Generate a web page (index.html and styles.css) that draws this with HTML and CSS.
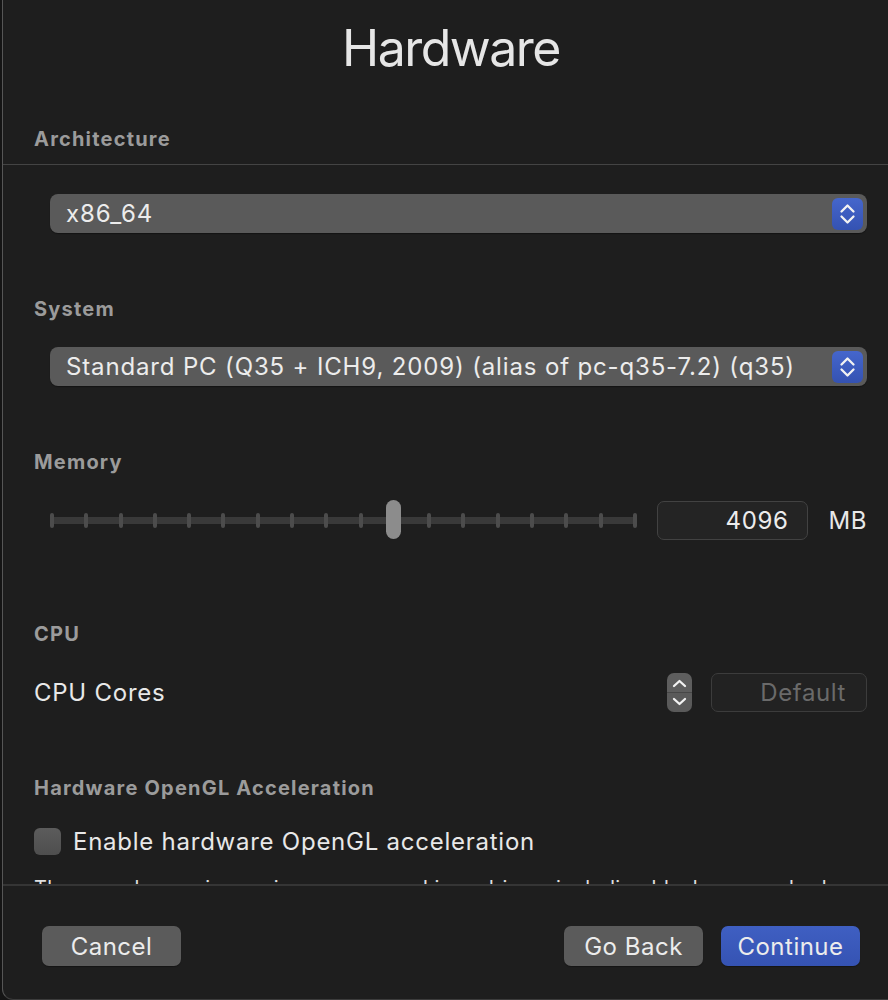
FILE: index.html
```html
<!DOCTYPE html>
<html>
<head>
<meta charset="utf-8">
<link rel="stylesheet" href="styles.css">
</head>
<body>
<div class="window">
  <header class="head">
    <h1 class="title">Hardware</h1>
    <div class="label arch-label">Architecture</div>
  </header>
  <main class="content">
    <div class="popup">
      <span class="popup-text">x86_64</span>
      <span class="popup-btn"><svg width="31" height="32" viewBox="0 0 31 32"><polyline points="9.5,13.5 15.5,7.5 21.5,13.5"/><polyline points="9.5,18.5 15.5,24.5 21.5,18.5"/></svg></span>
    </div>

    <div class="label sec-label">System</div>
    <div class="popup">
      <span class="popup-text">Standard PC (Q35 + ICH9, 2009) (alias of pc-q35-7.2) (q35)</span>
      <span class="popup-btn"><svg width="31" height="32" viewBox="0 0 31 32"><polyline points="9.5,13.5 15.5,7.5 21.5,13.5"/><polyline points="9.5,18.5 15.5,24.5 21.5,18.5"/></svg></span>
    </div>

    <div class="label sec-label">Memory</div>
    <div class="memory-row">
      <div class="slider">
        <div class="ticks">
          <i></i><i></i><i></i><i></i><i></i><i></i><i></i><i></i><i></i><i></i><i></i><i></i><i></i><i></i><i></i><i></i><i></i><i></i>
        </div>
        <span class="knob"></span>
      </div>
      <div class="field">4096</div>
      <span class="unit">MB</span>
    </div>

    <div class="label cpu-label">CPU</div>
    <div class="cpu-row">
      <span class="row-text">CPU Cores</span>
      <span class="stepper"><svg width="25" height="39" viewBox="0 0 25 39"><polyline points="7,13 12.5,8 18,13"/><polyline points="7,26 12.5,31 18,26"/></svg></span>
      <div class="field field-default">Default</div>
    </div>

    <div class="label sec-label">Hardware OpenGL Acceleration</div>
    <div class="check-row">
      <span class="checkbox"></span>
      <span class="row-text">Enable hardware OpenGL acceleration</span>
    </div>
    <p class="note">There are known issues in some newer Linux drivers including black screen, broken graphics and crashes.</p>
  </main>
  <footer class="foot">
    <button class="btn">Cancel</button>
    <div class="foot-right">
      <button class="btn">Go Back</button>
      <button class="btn btn-primary">Continue</button>
    </div>
  </footer>
</div>
</body>
</html>
```

FILE: styles.css
```css
html, body {
  margin: 0;
  padding: 0;
  width: 888px;
  height: 1000px;
  overflow: hidden;
  background: #151515;
}
body {
  font-family: Inter, "Noto Sans", sans-serif;
  color: #e8e8e8;
}
.window {
  margin-left: 2px;
  width: 896px;
  height: 999px;
  background: #1e1e1e;
  border-left: 1px solid #565656;
  border-bottom: 1px solid #3c3c3c;
  border-bottom-left-radius: 11px;
  display: flex;
  flex-direction: column;
  overflow: hidden;
}
.head {
  padding: 17px 0 13px 31px;
  border-bottom: 1px solid #444444;
  flex: none;
}
.title {
  margin: 0 0 48px -31px;
  font-size: 50px;
  line-height: 62px;
  font-weight: 400;
  text-align: center;
  color: #e6e6e6;
  letter-spacing: -1.5px;
}
.label {
  font-size: 20px;
  line-height: 24px;
  font-weight: 650;
  color: #9b9b9b;
  letter-spacing: 1.2px;
}
.content {
  height: 721px;
  flex: none;
  overflow: hidden;
  padding: 29px 32px 0 31px;
  box-sizing: border-box;
  border-bottom: 2px solid #353535;
}
.popup {
  margin-left: 16px;
  height: 39px;
  box-sizing: border-box;
  background: #5a5a5a;
  border-radius: 8px;
  display: flex;
  align-items: center;
  justify-content: space-between;
  padding: 0 4px 0 16px;
  box-shadow: 0 1px 1px rgba(0,0,0,0.35);
}
.popup-text {
  font-size: 24px;
  color: #ececec;
  letter-spacing: 0.85px;
}
.popup-btn {
  width: 31px;
  height: 32px;
  border-radius: 6px;
  background: linear-gradient(#4566cc, #3452b2);
  display: flex;
}
.popup-btn svg polyline, .stepper svg polyline {
  fill: none;
  stroke: #f2f2f2;
  stroke-width: 2.3;
  stroke-linecap: round;
  stroke-linejoin: round;
}
.sec-label {
  margin-top: 64px;
  margin-bottom: 26px;
}
.cpu-label {
  margin-top: 82px;
  margin-bottom: 26px;
}
.memory-row {
  margin-left: 16px;
  height: 40px;
  display: flex;
  align-items: center;
}
.slider {
  position: relative;
  width: 587px;
  height: 40px;
  flex: none;
  display: flex;
  align-items: center;
}
.ticks {
  width: 100%;
  height: 15px;
  display: flex;
  justify-content: space-between;
  background: linear-gradient(#1e1e1e 4px, #393939 4px, #393939 11px, #1e1e1e 11px);
}
.ticks i {
  width: 4px;
  height: 15px;
  border-radius: 2px;
  background: #4c4c4c;
}
.knob {
  position: absolute;
  left: 336px;
  top: 0;
  width: 15px;
  height: 39px;
  border-radius: 8px;
  background: #8c8c8c;
}
.field {
  height: 39px;
  box-sizing: border-box;
  border: 1px solid #424242;
  border-radius: 7px;
  background: #242424;
  font-size: 24px;
  line-height: 37px;
  text-align: right;
  padding-right: 19px;
  color: #ececec;
  letter-spacing: 0.6px;
}
.memory-row .field {
  width: 154px;
  margin-left: 20px;
}
.unit {
  margin-left: 20px;
  font-size: 24px;
  color: #e8e8e8;
  letter-spacing: 0.6px;
}
.cpu-row {
  height: 40px;
  display: flex;
  align-items: center;
}
.row-text {
  font-size: 24px;
  color: #e8e8e8;
  letter-spacing: 0.75px;
}
.cpu-row .row-text {
  flex: 1;
}
.stepper {
  width: 25px;
  height: 39px;
  border-radius: 7px;
  background: linear-gradient(#5e5e5e 0, #5e5e5e 19px, #474747 19px, #474747 20px, #5a5a5a 20px);
  display: flex;
}
.field-default {
  width: 156px;
  margin-left: 19px;
  color: #6a6a6a;
  border-color: #3c3c3c;
  background: #222222;
  padding-right: 20px;
}
.check-row {
  margin-top: 27px;
  height: 28px;
  display: flex;
  align-items: center;
}
.checkbox {
  width: 27px;
  height: 27px;
  border-radius: 6px;
  background: linear-gradient(#5c5c5c, #4e4e4e);
  margin-right: 12px;
  flex: none;
}
.note {
  margin: 21px 0 0;
  font-size: 20px;
  line-height: 24px;
  color: #e0e0e0;
  white-space: nowrap;
  letter-spacing: 0.4px;
}
.foot {
  flex: 1;
  display: flex;
  justify-content: space-between;
  align-items: flex-start;
  padding: 40px 39px 0 39px;
}
.foot-right {
  display: flex;
  gap: 18px;
}
.btn {
  width: 139px;
  height: 40px;
  border: none;
  border-radius: 7px;
  background: #5b5b5b;
  color: #ececec;
  font-family: Inter, "Noto Sans", sans-serif;
  font-size: 24px;
  padding: 0;
  letter-spacing: 0.5px;
  box-shadow: 0 1px 1px rgba(0,0,0,0.3);
}
.btn-primary {
  background: linear-gradient(#3f5fc2, #3553b3);
}
```
